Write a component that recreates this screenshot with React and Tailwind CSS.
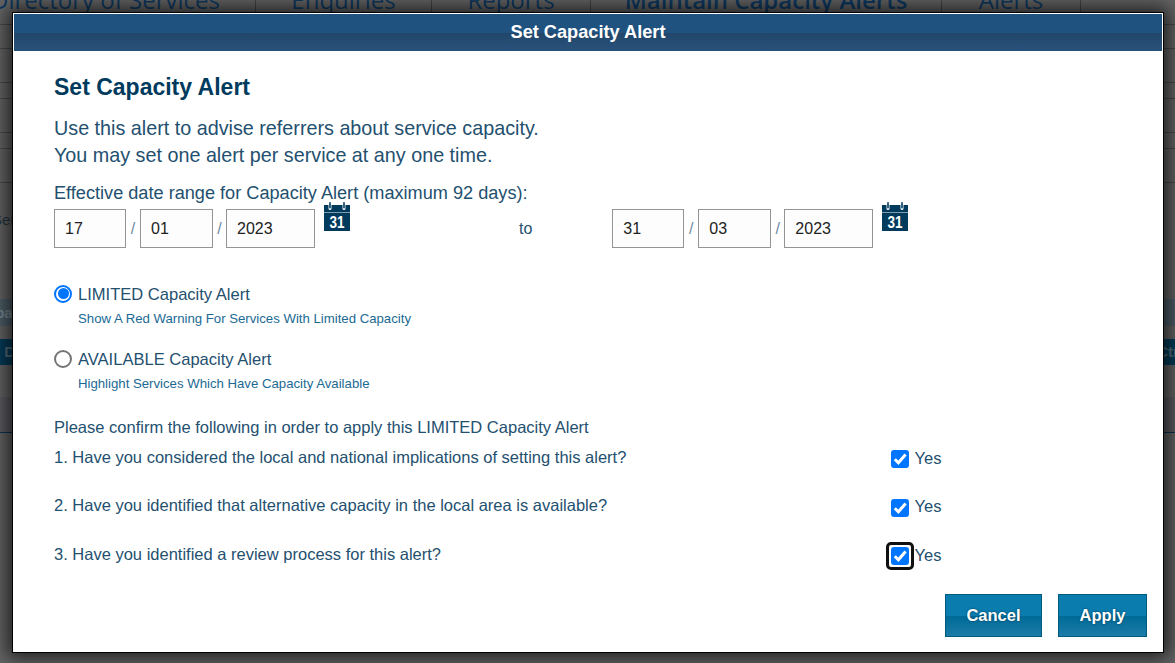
const font = "font-['Liberation_Sans',Arial,sans-serif]";

function CalendarIcon() {
  return (
    <svg width="26" height="29" viewBox="0 0 26 29" className="shrink-0 -mt-px">
      <path d="M0 3h4.5v3.5a1.5 1.5 0 0 0 3 0V3h11v3.5a1.5 1.5 0 0 0 3 0V3H26v7H0z" fill="#003a5d" />
      <rect x="5.2" y="0" width="1.6" height="6.5" rx=".8" fill="#003a5d" />
      <rect x="19.2" y="0" width="1.6" height="6.5" rx=".8" fill="#003a5d" />
      <rect x="0" y="10.5" width="26" height="18.5" fill="#003a5d" />
      <text x="5.5" y="26" fontSize="16" fontWeight="700" fill="#fff" textLength="15" lengthAdjust="spacingAndGlyphs" fontFamily="Liberation Sans, Arial, sans-serif">31</text>
    </svg>
  );
}

function DateField({ value, width }) {
  return (
    <div className={`${width} h-[39px] border border-[#949494] bg-[#fdfdfd] pl-[10px] flex items-center text-[16px] text-[#222]`}>
      {value}
    </div>
  );
}

function DateRange({ day, month, year }) {
  return (
    <div className="flex items-start">
      <div className="flex items-center mt-[6px]">
        <DateField value={day} width="w-[72px]" />
        <span className="w-[14px] text-center text-[#6f8ba3] text-[16px]">/</span>
        <DateField value={month} width="w-[73px]" />
        <span className="w-[13px] text-center text-[#6f8ba3] text-[16px]">/</span>
        <DateField value={year} width="w-[89px]" />
      </div>
      <div className="ml-[9px]"><CalendarIcon /></div>
    </div>
  );
}

function Radio({ checked }) {
  if (checked) {
    return (
      <span className="mb-[3px] w-[18px] h-[18px] rounded-full border-2 border-[#0075ff] bg-white flex items-center justify-center shrink-0">
        <span className="w-[11px] h-[11px] rounded-full bg-[#0075ff]" />
      </span>
    );
  }
  return <span className="mb-[3px] w-[18px] h-[18px] rounded-full border-2 border-[#767676] bg-white shrink-0" />;
}

function RadioOption({ checked, label, hint }) {
  return (
    <div>
      <div className="flex items-center gap-[6px] h-[20px]">
        <Radio checked={checked} />
        <span className="text-[16.55px] text-[#24506f]">{label}</span>
      </div>
      <div className="ml-[24px] mt-[7px] text-[13.2px] leading-[14px] text-[#1b6a94]">{hint}</div>
    </div>
  );
}

function Question({ text, focused }) {
  return (
    <div className="flex items-start h-[48.5px]">
      <span className="w-[837px] text-[16.5px] leading-[20px] text-[#24506f]">{text}</span>
      <span className="relative mt-[3.3px] w-[18px] h-[18px] rounded-[3px] bg-[#0075ff] flex items-center justify-center">
        <svg width="18" height="18" viewBox="0 0 18 18" fill="none">
          <path d="M3.8 9.2l3.6 3.6L14.6 4.4" stroke="#fff" strokeWidth="3" />
        </svg>
        {focused && <span className="absolute -inset-[5px] rounded-[5px] border-[3px] border-[#101010]" />}
      </span>
      <span className="ml-[5.5px] mt-[1px] text-[16.5px] leading-[20px] text-[#24506f]">Yes</span>
    </div>
  );
}

function Button({ children, width }) {
  return (
    <button className={`${width} h-[43px] border border-[#005a80] bg-[linear-gradient(#0a7cae_0%,#0a7cae_50%,#006a97_52%,#1c7ca8_100%)] text-white font-bold text-[16.5px] [text-shadow:0_0_2px_#00324a]`}>
      {children}
    </button>
  );
}

// page behind the overlay, only its edges show
function BehindPage() {
  return (
    <div className="absolute inset-0 bg-[#666666] overflow-hidden text-[#0f3a63]">
      <div className="flex h-[12px] items-end">
        {[
          ['w-[256px] pr-[44px]', 'Directory of Services'],
          ['w-[176px]', 'Enquiries'],
          ['w-[159px]', 'Reports'],
          ['w-[351px]', 'Maintain Capacity Alerts'],
          ['w-[139px]', 'Alerts'],
        ].map(([w, label], i) => (
          <div key={label} className={`${w} h-[12px] border-r border-[#444] flex justify-center items-end overflow-hidden`}>
            <span className={`text-[24px] leading-[24px] whitespace-nowrap font-['Open_Sans',sans-serif] ${i === 3 ? 'font-semibold' : ''}`}>{label}</span>
          </div>
        ))}
      </div>
      {/* table rules down the left edge */}
      <div className="mt-[12px] h-px bg-[#4a4a4a]" />
      <div className="mt-[23px] h-px bg-[#4a4a4a]" />
      <div className="mt-[33px] h-px bg-[#4a4a4a]" />
      <div className="mt-[15px] h-px bg-[#4a4a4a]" />
      <div className="mt-[33px] h-px bg-[#4a4a4a]" />
      <div className="mt-[15px] h-px bg-[#4a4a4a]" />
      <div className="mt-[33px] h-px bg-[#4a4a4a]" />
      <div className="mt-[27px] h-[20px] text-[15px] leading-[20px] text-[#24363f] -ml-[8px]">Services</div>
      <div className="mt-[69px] h-[27px] bg-[#4f5f69] text-[15px] font-bold leading-[27px] text-[#7a8c96] -ml-[24px]">Capacity</div>
      <div className="mt-[13px] h-[26px] bg-[#053d5a] flex justify-between text-[15px] font-bold leading-[26px] text-[#56707f]">
        <span className="-ml-[4px]">l D</span>
        <span className="-mr-[8px]">Ctrl</span>
      </div>
      <div className="mt-[32px] h-[36px] bg-[#5d5d63] border-b border-[#0c3550]" />
    </div>
  );
}

export default function App() {
  return (
    <div className={`relative w-[1175px] h-[663px] overflow-hidden ${font}`}>
      <BehindPage />
      <div className="relative pt-[12px] pl-[12px]">
        <div className="w-[1152px] h-[641px] border border-black p-px bg-white shadow-[0_0_18px_5px_rgba(0,0,0,0.7)]">
          <div className="h-[37px] flex items-center justify-center text-white font-bold text-[18.2px] bg-[linear-gradient(#20527f_0%,#20527f_50%,#23466a_52%,#28527c_100%)]">
            Set Capacity Alert
          </div>
          <div className="pl-[40px] pr-[15px] pt-[23px]">
            <h1 className="text-[23px] leading-[26px] font-bold text-[#003a5d]">Set Capacity Alert</h1>
            <p className="mt-[15px] text-[19.75px] leading-[27px] text-[#24506f]">
              Use this alert to advise referrers about service capacity.<br />
              You may set one alert per service at any one time.
            </p>
            <p className="mt-[14px] text-[18.15px] leading-[20px] text-[#24506f]">Effective date range for Capacity Alert (maximum 92 days):</p>
            <div className="flex items-start">
              <DateRange day="17" month="01" year="2023" />
              <span className="ml-[169px] mt-[16px] text-[16px] leading-[20px] text-[#24506f]">to</span>
              <div className="ml-[80px]"><DateRange day="31" month="03" year="2023" /></div>
            </div>
            <div className="mt-[37px] flex flex-col gap-[24px]">
              <RadioOption checked label="LIMITED Capacity Alert" hint="Show A Red Warning For Services With Limited Capacity" />
              <RadioOption label="AVAILABLE Capacity Alert" hint="Highlight Services Which Have Capacity Available" />
            </div>
            <p className="mt-[26px] text-[16.5px] leading-[20px] text-[#24506f]">Please confirm the following in order to apply this LIMITED Capacity Alert</p>
            <div className="mt-[9.75px]">
              <Question text="1. Have you considered the local and national implications of setting this alert?" />
              <Question text="2. Have you identified that alternative capacity in the local area is available?" />
              <Question text="3. Have you identified a review process for this alert?" focused />
            </div>
            <div className="flex justify-end gap-[16px] mt-[1.25px]">
              <Button width="w-[97px]">Cancel</Button>
              <Button width="w-[89px]">Apply</Button>
            </div>
          </div>
        </div>
      </div>
    </div>
  );
}
